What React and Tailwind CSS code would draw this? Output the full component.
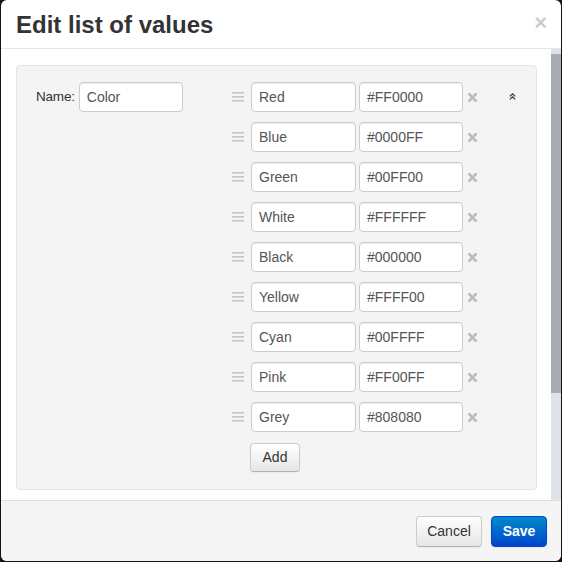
import React from "react";

const values = [
  ["Red", "#FF0000"],
  ["Blue", "#0000FF"],
  ["Green", "#00FF00"],
  ["White", "#FFFFFF"],
  ["Black", "#000000"],
  ["Yellow", "#FFFF00"],
  ["Cyan", "#00FFFF"],
  ["Pink", "#FF00FF"],
  ["Grey", "#808080"],
];

const inputCls =
  "h-[30px] rounded-[4px] border border-[#ccc] bg-white px-[7px] text-[14px] text-[#555] shadow-[inset_0_1px_1px_rgba(0,0,0,0.075)] outline-none";

const Handle = () => (
  <svg width="12" height="10" viewBox="0 0 12 10" className="shrink-0">
    <rect x="0" y="0" width="12" height="1.6" fill="#c6c6c6" />
    <rect x="0" y="4" width="12" height="1.6" fill="#c6c6c6" />
    <rect x="0" y="8" width="12" height="1.6" fill="#c6c6c6" />
  </svg>
);

const RemoveIcon = () => (
  <svg width="9" height="9" viewBox="0 0 9 9" className="shrink-0">
    <path d="M1.3 1.3 L7.7 7.7 M7.7 1.3 L1.3 7.7" stroke="#bdbdbd" strokeWidth="2.8" strokeLinecap="round" />
  </svg>
);

const CollapseIcon = () => (
  <svg width="7" height="7" viewBox="0 0 7 7">
    <path d="M0.8 3.4 L3.5 0.9 L6.2 3.4 M0.8 6.4 L3.5 3.9 L6.2 6.4" stroke="#333" strokeWidth="1.2" fill="none" />
  </svg>
);

const ValueRow = ({ name, hex }) => (
  <div className="flex items-center">
    <Handle />
    <input readOnly value={name} className={`${inputCls} ml-[7px] w-[105px]`} />
    <input readOnly value={hex} className={`${inputCls} ml-[3px] w-[104px]`} />
    <div className="ml-[5px]">
      <RemoveIcon />
    </div>
  </div>
);

export default function App() {
  return (
    <div className="w-[562px] h-[562px] bg-[#151515] pl-[1px] font-['Liberation_Sans',Arial,sans-serif]">
      <div className="w-[560px] h-[561px] bg-white rounded-[6px] overflow-hidden flex flex-col">
        {/* header */}
        <div className="h-[49px] shrink-0 border-b border-[#e5e5e5] flex items-center justify-between pl-[15px] pr-[14px]">
          <h3 className="text-[24px] font-bold text-[#333] leading-none mt-[1px]">Edit list of values</h3>
          <span className="text-[22px] font-bold text-black opacity-20 leading-none -mt-[3px]">×</span>
        </div>

        {/* body */}
        <div className="flex h-[451px] shrink-0">
          <div className="flex-1 pt-[16px] pl-[15px] pr-[14px]">
            <div className="rounded-[4px] border border-[#e3e3e3] bg-[#f4f4f4] flex pt-[16px] pb-[17px] pl-[19px]">
              <div className="w-[196px] flex items-start">
                <label className="text-[13.5px] tracking-[-0.2px] text-[#333] pt-[5px]">Name:</label>
                <input readOnly value="Color" className={`${inputCls} ml-[4px] w-[104px]`} />
              </div>
              <div className="flex flex-col gap-[10px]">
                {values.map(([n, h]) => (
                  <ValueRow key={n} name={n} hex={h} />
                ))}
                <div className="pt-[1px] pl-[18px]">
                  <button className="h-[29px] w-[50px] rounded-[4px] border border-[#ccc] border-b-[#b3b3b3] bg-gradient-to-b from-white to-[#e6e6e6] text-[14px] text-[#333] shadow-[inset_0_1px_0_rgba(255,255,255,0.2),0_1px_2px_rgba(0,0,0,0.05)]">
                    Add
                  </button>
                </div>
              </div>
              <div className="ml-[32px] pt-[11px]">
                <CollapseIcon />
              </div>
            </div>
          </div>
          <div className="w-[10px] bg-[#dfe2ea] pt-[5px] pb-[107px]">
            <div className="h-full bg-[#a9acb0]" />
          </div>
        </div>

        {/* footer */}
        <div className="flex-1 border-t border-[#dddddd] bg-[#f5f5f5] flex justify-end items-start pt-[15px] pr-[14px] gap-[9px]">
          <button className="h-[31px] w-[66px] rounded-[4px] border border-[#ccc] border-b-[#b3b3b3] bg-gradient-to-b from-white to-[#e6e6e6] text-[14px] text-[#333] shadow-[0_1px_2px_rgba(0,0,0,0.05)]">
            Cancel
          </button>
          <button className="h-[31px] w-[56px] rounded-[4px] border border-[#0044cc] bg-gradient-to-b from-[#0088cc] to-[#0044cc] text-[14px] font-bold text-white shadow-[0_1px_2px_rgba(0,0,0,0.05)]">
            Save
          </button>
        </div>
      </div>
    </div>
  );
}
